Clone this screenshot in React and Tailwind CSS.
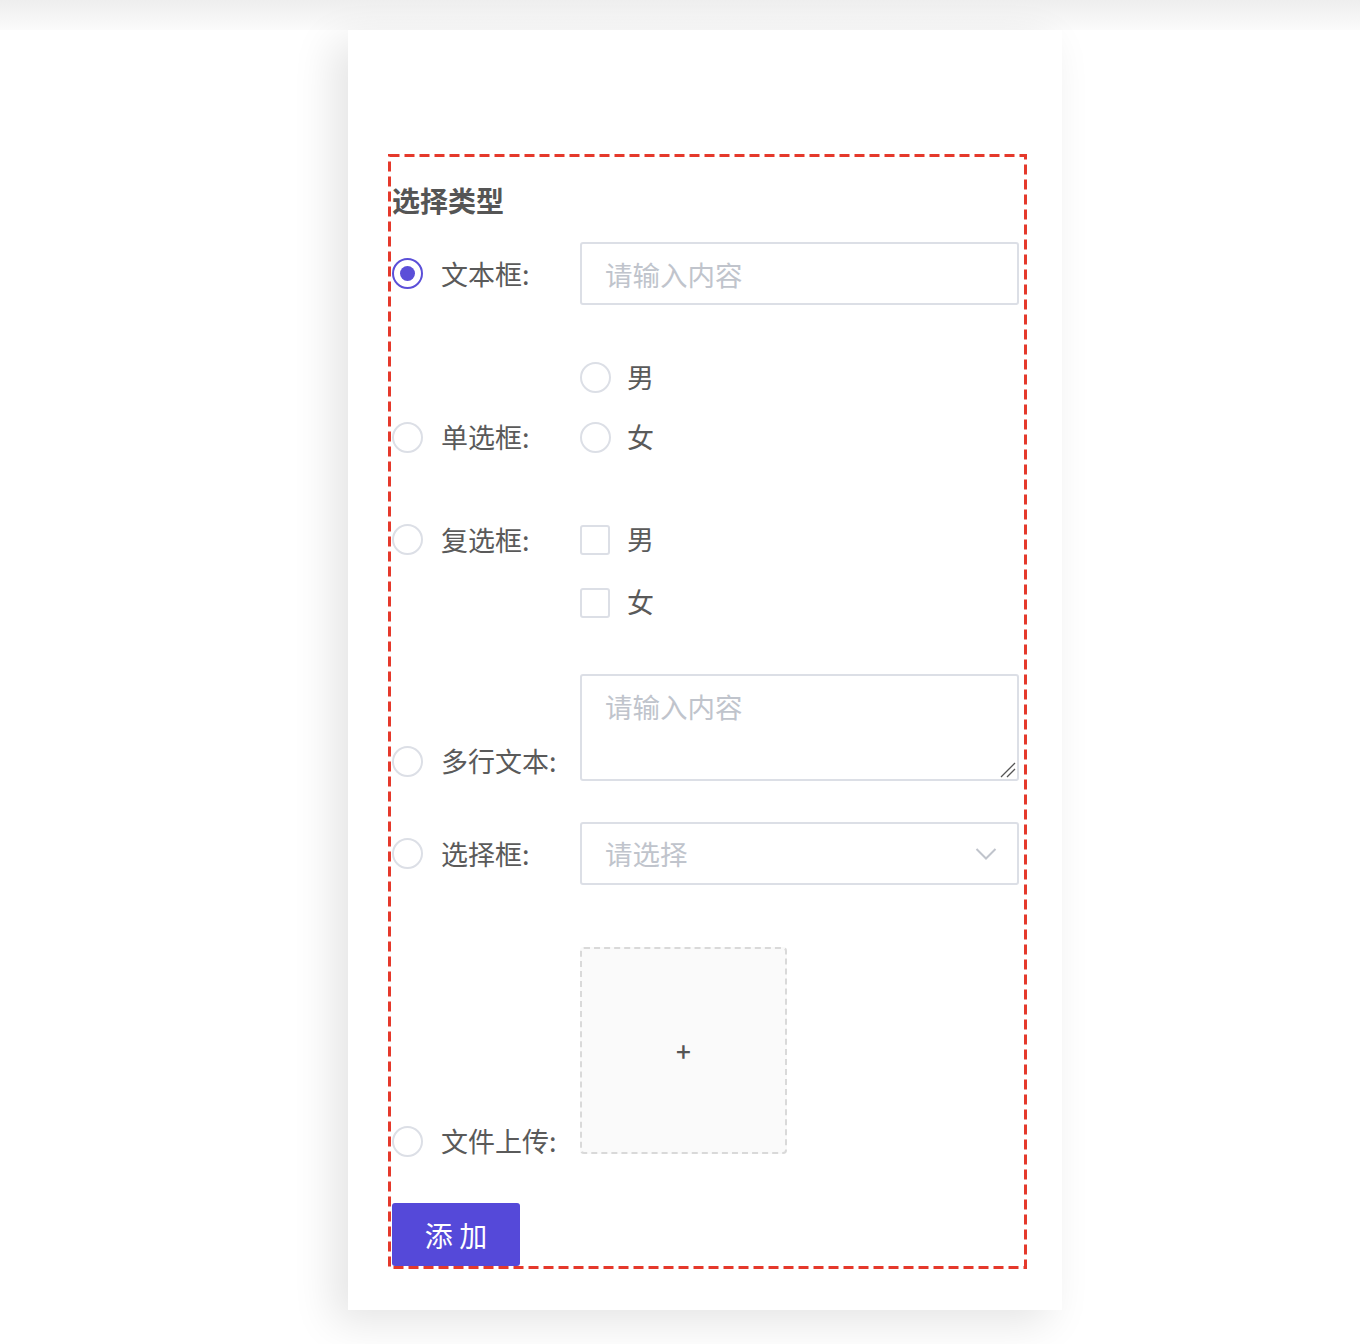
import { useState } from "react";

const font = { fontFamily: '"Noto Sans CJK SC", "Noto Sans", sans-serif' };

function Radio({ checked }) {
  return (
    <span
      className={
        "flex h-[31px] w-[31px] shrink-0 items-center justify-center rounded-full border-2 bg-white " +
        (checked ? "border-[#5b4fd8]" : "border-[#dcdfe6]")
      }
    >
      {checked && <span className="h-[15px] w-[15px] rounded-full bg-[#5b4fd8]" />}
    </span>
  );
}

function Check() {
  return <span className="block h-[30px] w-[30px] shrink-0 rounded-[3px] border-2 border-[#dcdfe6] bg-white" />;
}

function Label({ children }) {
  return <span className="ml-[18px] w-[139px] shrink-0 text-[27px] leading-[40px] text-[#5a5a5a]">{children}</span>;
}

export default function App() {
  const [type, setType] = useState("text");

  return (
    <div className="min-h-[1344px] bg-white" style={font}>
      <div className="h-[30px] bg-gradient-to-b from-[#eeeeee] to-[#fbfbfb]" />
      <div className="ml-[348px] h-[1280px] w-[714px] bg-white pl-[40px] pt-[124px] shadow-[-14px_12px_40px_rgba(0,0,0,0.11)]">
        <div className="relative w-[639px] pb-[5px] pl-[4px] pr-[8px] pt-[30px]">
          {/* dashed outline */}
          <svg className="pointer-events-none absolute inset-0 h-full w-full">
            <rect
              x="1.5"
              y="1.5"
              width="636"
              height="1112"
              fill="none"
              stroke="#e5392b"
              strokeWidth="3"
              strokeDasharray="10 5"
            />
          </svg>

          <h3 className="text-[28px] font-bold leading-[32px] text-[#555]">选择类型</h3>

          {/* 文本框 */}
          <div className="mt-[26px] flex items-center" onClick={() => setType("text")}>
            <Radio checked={type === "text"} />
            <Label>文本框:</Label>
            <input
              className="h-[63px] flex-1 rounded-[3px] border-2 border-[#dcdfe6] px-[23px] text-[27.5px] text-[#606266] outline-none placeholder:text-[#c0c4cc]"
              placeholder="请输入内容"
            />
          </div>

          {/* 单选框 */}
          <div className="mt-[42px] flex items-end" onClick={() => setType("radio")}>
            <div className="flex h-[60px] items-center">
              <Radio checked={type === "radio"} />
              <Label>单选框:</Label>
            </div>
            <div className="flex flex-col">
              {["男", "女"].map((s) => (
                <div key={s} className="flex h-[60px] items-center gap-[16px]">
                  <Radio />
                  <span className="text-[27px] text-[#5a5a5a]">{s}</span>
                </div>
              ))}
            </div>
          </div>

          {/* 复选框 */}
          <div className="mt-[41px] flex items-start" onClick={() => setType("check")}>
            <div className="flex h-[63px] items-center">
              <Radio checked={type === "check"} />
              <Label>复选框:</Label>
            </div>
            <div className="flex flex-col">
              {["男", "女"].map((s) => (
                <div key={s} className="flex h-[63px] items-center gap-[17px]">
                  <Check />
                  <span className="text-[27px] text-[#5a5a5a]">{s}</span>
                </div>
              ))}
            </div>
          </div>

          {/* 多行文本 */}
          <div className="mt-[40px] flex items-end" onClick={() => setType("textarea")}>
            <div className="flex items-center">
              <Radio checked={type === "textarea"} />
              <Label>多行文本:</Label>
            </div>
            <div className="relative flex-1">
              <textarea
                className="block h-[107px] w-full resize-none rounded-[3px] border-2 border-[#dcdfe6] px-[23px] py-[10px] text-[27.5px] leading-[40px] text-[#606266] outline-none placeholder:text-[#c0c4cc]"
                placeholder="请输入内容"
              />
              <svg className="absolute bottom-[3px] right-[3px]" width="16" height="16" viewBox="0 0 16 16">
                <path d="M1 15 L15 1 M7 15 L15 7" stroke="#555" strokeWidth="1.3" />
              </svg>
            </div>
          </div>

          {/* 选择框 */}
          <div className="mt-[41px] flex items-center" onClick={() => setType("select")}>
            <Radio checked={type === "select"} />
            <Label>选择框:</Label>
            <div className="flex h-[63px] flex-1 items-center justify-between rounded-[3px] border-2 border-[#dcdfe6] pl-[23px] pr-[20px]">
              <span className="text-[27.5px] text-[#c0c4cc]">请选择</span>
              <svg width="22" height="14" viewBox="0 0 22 14" fill="none">
                <path d="M1.5 2 L11 11.5 L20.5 2" stroke="#c0c4cc" strokeWidth="2" />
              </svg>
            </div>
          </div>

          {/* 文件上传 */}
          <div className="mt-[62px] flex items-end" onClick={() => setType("file")}>
            <div className="flex translate-y-[7px] items-center">
              <Radio checked={type === "file"} />
              <Label>文件上传:</Label>
            </div>
            <div className="flex h-[207px] w-[207px] items-center justify-center rounded-[4px] border-2 border-dashed border-[#d9d9d9] bg-[#fafafa]">
              <span className="text-[26px] font-medium leading-none text-[#555]">+</span>
            </div>
          </div>

          <button className="mt-[49px] flex h-[63px] w-[128px] items-center justify-center rounded-[3px] bg-[#5549d9] text-[28px] text-white">
            添 加
          </button>
        </div>
      </div>
    </div>
  );
}
